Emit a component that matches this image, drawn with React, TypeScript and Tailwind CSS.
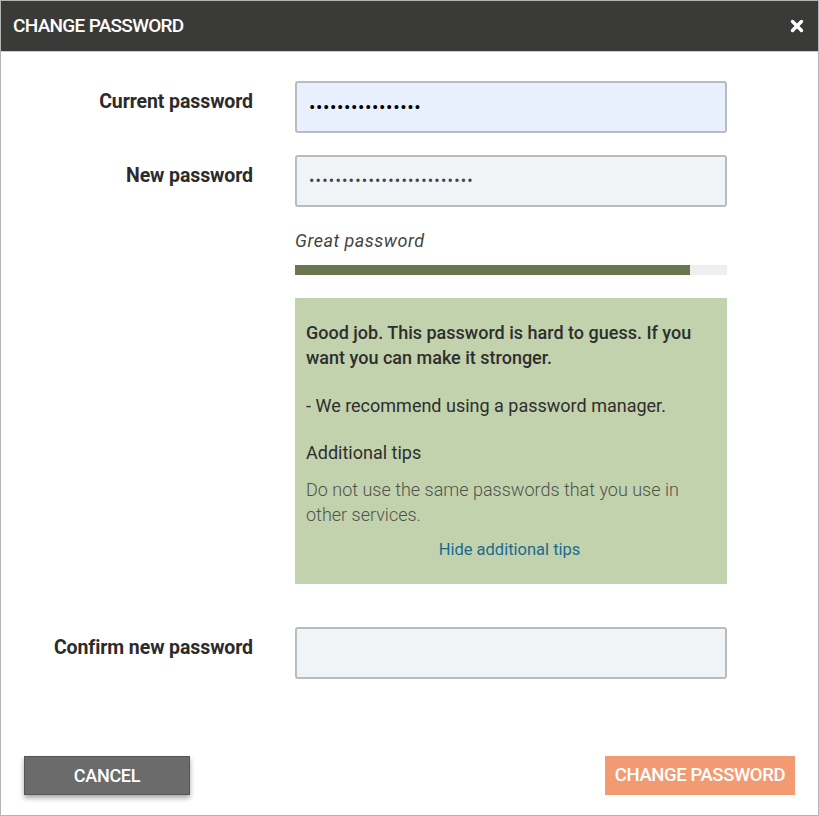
import { X } from "lucide-react"

export default function App() {
  const label = "text-right text-[19.5px] font-bold text-[#2b2b2b] pt-[9px] leading-[24px] tracking-[-0.1px]"
  const input =
    "h-[52px] w-[432px] rounded-[3px] border-2 border-[#b9bcbf] px-[12px] flex items-center"

  return (
    <div
      className="w-[819px] h-[816px] bg-white border border-[#b4b4b4] flex flex-col"
      style={{ fontFamily: "Roboto, 'Liberation Sans', sans-serif" }}
    >
      {/* Header */}
      <div className="h-[51px] bg-[#3a3b39] flex items-center justify-between pl-[12px] pr-[12px] border-b border-[#cfcfcf]">
        <h1 className="text-white text-[19px] font-medium tracking-[-0.7px]">CHANGE PASSWORD</h1>
        <X size={18} strokeWidth={4.5} className="text-white" />
      </div>

      {/* Form */}
      <div className="pt-[29px] flex flex-col">
        <div className="grid grid-cols-[252px_432px] gap-x-[42px]">
          <div className={label}>Current password</div>
          <div className={`${input} bg-[#e8f0fe]`}>
            <span className="text-[19px] tracking-[0.6px] text-black leading-none">••••••••••••••••</span>
          </div>
        </div>

        <div className="grid grid-cols-[252px_432px] gap-x-[42px] mt-[22px]">
          <div className={label}>New password</div>
          <div className="flex flex-col">
            <div className={`${input} bg-[#f1f4f7]`}>
              <span className="text-[16px] tracking-[1.2px] text-[#444] leading-none">•••••••••••••••••••••••••</span>
            </div>
            <div className="mt-[22px] text-[18px] italic text-[#444] tracking-[0.5px] leading-[24px]">Great password</div>
            <div className="mt-[12px] h-[10px] bg-[#efefef]">
              <div className="h-full bg-[#6a7650]" style={{ width: "91.5%" }} />
            </div>
            <div className="mt-[23px] h-[286px] bg-[#c1d2ad] pl-[11px] pr-[14px] pt-[22px] text-[18px] leading-[25px] text-[#2e2e2e]">
              <p className="font-medium">
                Good job. This password is hard to guess. If you want you can make it stronger.
              </p>
              <p className="mt-[23px]">- We recommend using a password manager.</p>
              <p className="mt-[22px]">Additional tips</p>
              <p className="mt-[12px] font-light text-[#4f524c]">
                Do not use the same passwords that you use in other services.
              </p>
              <p className="mt-[10px] text-center text-[16.5px] text-[#1d6a8f]">Hide additional tips</p>
            </div>
          </div>
        </div>

        <div className="grid grid-cols-[252px_432px] gap-x-[42px] mt-[43px]">
          <div className={label}>Confirm new password</div>
          <div className={`${input} bg-[#f1f4f7]`} />
        </div>
      </div>

      {/* Footer */}
      <div className="mt-auto mb-[20px] flex justify-between px-[23px]">
        <button className="w-[166px] h-[39px] bg-[#6b6b6b] border border-[#555] text-white text-[18px] font-medium tracking-[-0.3px] shadow-[0_3px_5px_rgba(0,0,0,0.35)]">
          CANCEL
        </button>
        <button className="w-[190px] h-[39px] bg-[#f29b72] text-white text-[18.5px] font-medium tracking-[-0.4px]">
          CHANGE PASSWORD
        </button>
      </div>
    </div>
  )
}
